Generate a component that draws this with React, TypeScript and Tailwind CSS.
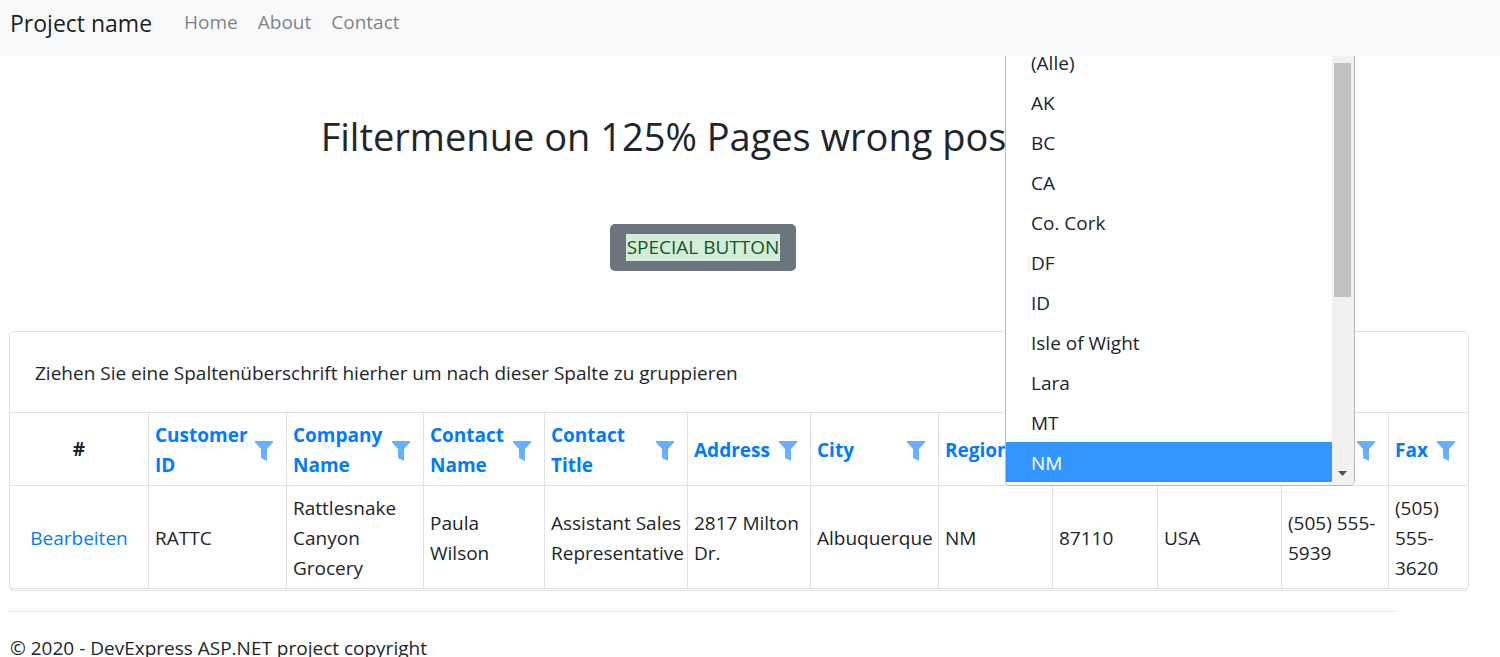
import React from "react";

type Column = { title: string; width: string; value: string };

const columns: Column[] = [
  { title: "Customer ID", width: "w-[138px]", value: "RATTC" },
  { title: "Company Name", width: "w-[137px]", value: "Rattlesnake Canyon Grocery" },
  { title: "Contact Name", width: "w-[121px]", value: "Paula Wilson" },
  { title: "Contact Title", width: "w-[143px]", value: "Assistant Sales Representative" },
  { title: "Address", width: "w-[123px]", value: "2817 Milton Dr." },
  { title: "City", width: "w-[128px]", value: "Albuquerque" },
  { title: "Region", width: "w-[114px]", value: "NM" },
  { title: "Postal Code", width: "w-[105px]", value: "87110" },
  { title: "Country", width: "w-[124px]", value: "USA" },
  { title: "Phone", width: "w-[107px]", value: "(505) 555-5939" },
  { title: "Fax", width: "w-[79px]", value: "(505) 555-3620" },
];

const regions = ["(Alle)", "AK", "BC", "CA", "Co. Cork", "DF", "ID", "Isle of Wight", "Lara", "MT", "NM"];

function Funnel() {
  return (
    <svg width="18" height="20" viewBox="0 0 18 20" fill="#66b0ff" aria-hidden="true">
      <path d="M0 0H18V1.5L12 8V20L6 17V8L0 1.5Z" />
    </svg>
  );
}

function FilterMenu() {
  return (
    <div className="absolute -bottom-px left-[66px] z-10 flex w-[350px] rounded-b-[5px] border border-[#b9b9bb] bg-white pt-px font-normal text-[#212529]">
      <ul className="grow pb-[3px]">
        {regions.map((region) => (
          <li key={region}>
            <button
              type="button"
              className={
                region === "NM"
                  ? "block h-10 w-full bg-[#3395ff] pt-[2px] pl-[25px] text-left text-white"
                  : "block h-10 w-full pt-[2px] pl-[25px] text-left"
              }
            >
              {region}
            </button>
          </li>
        ))}
      </ul>
      <div className="flex w-[22px] flex-col justify-between rounded-br-[4px] bg-[#f1f1f1] pr-px pl-[2px]">
        <div className="mt-[21px] mr-[2px] h-[234px] bg-[#c1c1c1]" />
        <svg className="mb-[9px] ml-1" width="9" height="5" viewBox="0 0 9 5" fill="#505050" aria-hidden="true">
          <path d="M0 0H9L4.5 5Z" />
        </svg>
      </div>
    </div>
  );
}

export default function App() {
  return (
    <div className="h-screen overflow-hidden bg-white font-['Open_Sans','Noto_Sans',sans-serif] text-[19px] leading-[30px] text-[#212529]">
      <nav className="relative z-20 flex h-14 items-start bg-[#f8f9fa] pt-[7px] pl-[10px]">
        <a href="#" className="mr-8 text-[23px] leading-8 text-black/90">
          Project name
        </a>
        <div className="flex gap-5 text-black/50">
          <a href="#home">Home</a>
          <a href="#about">About</a>
          <a href="#contact">Contact</a>
        </div>
      </nav>

      <main className="pl-[9px]">
        <div className="mr-[103px] flex flex-col items-center">
          <h1 className="mt-14 text-[38px] leading-[48px]">Filtermenue on 125% Pages wrong position</h1>
          <button type="button" className="mt-16 mb-[60px] flex h-[47px] items-center rounded-[5px] bg-[#6c757d] px-4">
            <span className="bg-[#d4edda] px-px leading-[27px] text-[#155724]">SPECIAL BUTTON</span>
          </button>
        </div>

        <section className="mr-[31px] rounded-[5px] border border-[#dee2e6] pb-px">
          <div className="flex h-[81px] items-center border-b border-[#dee2e6] pt-[2px] pl-[25px]">
            Ziehen Sie eine Spaltenüberschrift hierher um nach dieser Spalte zu gruppieren
          </div>
          <table className="w-full table-fixed border-separate border-spacing-0">
            <thead>
              <tr>
                <th className="w-[139px] border-r border-b border-[#dee2e6] font-bold">#</th>
                {columns.map(({ title, width }) => (
                  <th
                    key={title}
                    className={`${width} relative border-r border-b border-[#dee2e6] pt-[7px] pr-[13px] pb-[5px] pl-[6px] text-left font-bold last:border-r-0`}
                  >
                    <div className="flex items-center justify-between">
                      <a href="#sort" className="min-w-0 text-[#007bff]">
                        {title}
                      </a>
                      <button type="button" aria-label={`${title} filter`} className="shrink-0 pt-[2px]">
                        <Funnel />
                      </button>
                    </div>
                    {title === "Region" && <FilterMenu />}
                  </th>
                ))}
              </tr>
            </thead>
            <tbody>
              <tr>
                <td className="border-r border-b border-[#dee2e6] pt-[2px] text-center">
                  <a href="#edit" className="text-[#007bff]">
                    Bearbeiten
                  </a>
                </td>
                {columns.map(({ title, value }) => (
                  <td
                    key={title}
                    className="border-r border-b border-[#dee2e6] pt-[7px] pr-1 pb-[5px] pl-[6px] last:border-r-0"
                  >
                    {value}
                  </td>
                ))}
              </tr>
            </tbody>
          </table>
        </section>

        <hr className="mt-5 mr-[103px] border-[#e5e5e5]" />
        <footer className="mt-[21px] pl-px">© 2020 - DevExpress ASP.NET project copyright</footer>
      </main>
    </div>
  );
}
